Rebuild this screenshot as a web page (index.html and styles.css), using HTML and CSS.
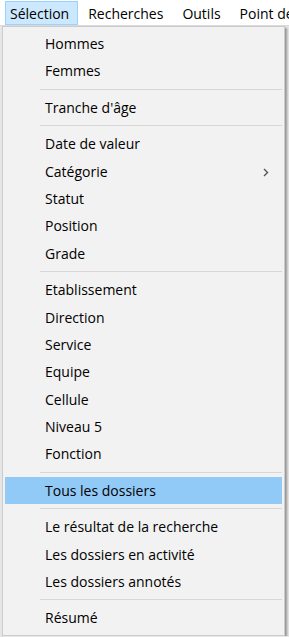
FILE: index.html
```html
<!DOCTYPE html>
<html lang="fr">
<head>
    <meta charset="UTF-8">
    <meta name="viewport" content="width=device-width, initial-scale=1.0">
    <title>Menu Sélection</title>
    <link rel="stylesheet" href="styles.css">
</head>
<body>
    <div class="menubar">
        <span class="menubar-item active">Sélection</span>
        <span class="menubar-item">Recherches</span>
        <span class="menubar-item">Outils</span>
        <span class="menubar-item">Point de</span>
    </div>

    <div class="popup">
        <div class="item">Hommes</div>
        <div class="item">Femmes</div>
        <div class="separator"></div>
        <div class="item">Tranche d'âge</div>
        <div class="separator"></div>
        <div class="item">Date de valeur</div>
        <div class="item has-sub">Catégorie
            <svg class="chevron" width="6" height="9" viewBox="0 0 6 9"><path d="M1 1 L4.5 4.5 L1 8" fill="none" stroke="#555" stroke-width="1.4"/></svg>
        </div>
        <div class="item">Statut</div>
        <div class="item">Position</div>
        <div class="item">Grade</div>
        <div class="separator"></div>
        <div class="item">Etablissement</div>
        <div class="item">Direction</div>
        <div class="item">Service</div>
        <div class="item">Equipe</div>
        <div class="item">Cellule</div>
        <div class="item">Niveau 5</div>
        <div class="item">Fonction</div>
        <div class="separator"></div>
        <div class="item selected">Tous les dossiers</div>
        <div class="separator"></div>
        <div class="item">Le résultat de la recherche</div>
        <div class="item">Les dossiers en activité</div>
        <div class="item">Les dossiers annotés</div>
        <div class="separator"></div>
        <div class="item">Résumé</div>
    </div>
</body>
</html>
```

FILE: styles.css
```css
/* Windows style dropdown menu */
body {
    font-family: "Open Sans", "Noto Sans", sans-serif;
    font-size: 14px;
    color: #000;
    background-color: #e6e6e6;
    margin: 0;
    padding: 0;
    overflow: hidden;
}

.menubar {
    display: flex;
    gap: 5px;
    height: 26px;
    background-color: #fff;
    border-bottom: 1px solid #d9d9d9;
    box-sizing: border-box;
    padding-left: 5px;
    white-space: nowrap;
    overflow: hidden;
}

.menubar-item {
    display: flex;
    align-items: center;
    padding: 0 8px 0 4px;
    margin-top: 1px;
    height: 24px;
    border: 1px solid transparent;
    box-sizing: border-box;
}

.menubar-item.active {
    background-color: #cce8ff;
    border-color: #99d1ff;
}

.popup {
    width: 283px;
    margin-left: 2px;
    padding: 3px 2px;
    background-color: #f2f2f2;
    border: 1px solid #cccccc;
    box-sizing: border-box;
    box-shadow: 2px 2px 2px rgba(0, 0, 0, 0.35);
}

.item {
    position: relative;
    height: 27.4px;
    line-height: 27.4px;
    padding-left: 40px;
    white-space: nowrap;
}

.item.selected {
    background-color: #91c9f7;
}

.chevron {
    position: absolute;
    right: 13px;
    top: 10px;
}

.separator {
    height: 1px;
    margin: 4px 0 4px 35px;
    background-color: #d7d7d7;
}
```
